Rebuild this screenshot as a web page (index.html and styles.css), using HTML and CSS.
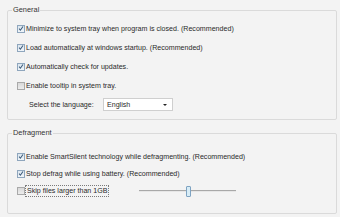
FILE: index.html
```html
<!DOCTYPE html>
<html>
<head>
<meta charset="utf-8">
<link rel="stylesheet" href="styles.css">
</head>
<body>
<div class="page">
  <fieldset class="group general">
    <legend>General</legend>
    <div class="row"><span class="cb on"><svg viewBox="0 0 8 8"><path d="M1.5 4.2 L3.2 6.3 L6.6 1.4"/></svg></span><span class="lbl">Minimize to system tray when program is closed. (Recommended)</span></div>
    <div class="row"><span class="cb on"><svg viewBox="0 0 8 8"><path d="M1.5 4.2 L3.2 6.3 L6.6 1.4"/></svg></span><span class="lbl">Load automatically at windows startup. (Recommended)</span></div>
    <div class="row"><span class="cb on"><svg viewBox="0 0 8 8"><path d="M1.5 4.2 L3.2 6.3 L6.6 1.4"/></svg></span><span class="lbl">Automatically check for updates.</span></div>
    <div class="row"><span class="cb"></span><span class="lbl">Enable tooltip in system tray.</span></div>
    <div class="row lang">
      <span class="lang-label">Select the language:</span>
      <span class="select"><span class="sel-text">English</span><span class="arrow"></span></span>
    </div>
  </fieldset>
  <fieldset class="group defrag">
    <legend>Defragment</legend>
    <div class="row r2"><span class="cb on"><svg viewBox="0 0 8 8"><path d="M1.5 4.2 L3.2 6.3 L6.6 1.4"/></svg></span><span class="lbl">Enable SmartSilent technology while defragmenting. (Recommended)</span></div>
    <div class="row r2"><span class="cb on"><svg viewBox="0 0 8 8"><path d="M1.5 4.2 L3.2 6.3 L6.6 1.4"/></svg></span><span class="lbl">Stop defrag while using battery. (Recommended)</span></div>
    <div class="row r2 last"><span class="cb"></span><span class="lbl focus">Skip files larger than 1GB</span>
      <span class="slider"><span class="track"></span><span class="thumb"></span></span>
    </div>
  </fieldset>
</div>
</body>
</html>
```
FILE: styles.css
```css
html, body {
  margin: 0;
  padding: 0;
  background: #f3f3f3;
}
body {
  font-family: "Liberation Sans", Arial, sans-serif;
  font-size: 7.1px;
  color: #2a2a2a;
}
.page {
  padding: 5px 0 0 7px;
}
.group {
  box-sizing: border-box;
  width: 330px;
  margin: 0;
  border: 1px solid #dadada;
  border-radius: 2px;
  padding: 0 4px;
}
.group legend {
  padding: 0 1px;
  line-height: 10px;
  color: #333;
  font-size: 7.4px;
}
.general {
  padding-top: 4px;
  padding-bottom: 5px;
}
.defrag {
  margin-top: 8px;
  padding-top: 10px;
  padding-bottom: 13px;
}
.row {
  display: flex;
  align-items: center;
  height: 19px;
  padding-left: 5px;
}
.row.r2 {
  height: 17px;
}
.row.last {
  height: 18px;
}
.cb {
  box-sizing: border-box;
  width: 8px;
  height: 8px;
  border: 1px solid #a9a9a9;
  background: linear-gradient(#d9d9d9, #ececec);
  margin-right: 1px;
  display: flex;
  align-items: center;
  justify-content: center;
  flex: none;
}
.cb.on {
  border-color: #8fa6bd;
  background: linear-gradient(#dbe6ef, #f0f5f9);
}
.cb svg {
  width: 7px;
  height: 7px;
  fill: none;
  stroke: #3b5a7a;
  stroke-width: 1.4;
}
.lbl {
  white-space: nowrap;
  line-height: 10px;
}
.focus {
  outline: 1px dotted #7a7a7a;
  outline-offset: 0;
  padding: 0 1px;
}
.lang-label {
  margin-left: 12px;
  width: 74px;
}
.select {
  box-sizing: border-box;
  width: 70px;
  height: 13px;
  background: #fff;
  border: 1px solid #cfcfcf;
  display: flex;
  align-items: center;
  justify-content: space-between;
  padding: 0 5px 0 3px;
}
.arrow {
  width: 0;
  height: 0;
  border-left: 2px solid transparent;
  border-right: 2px solid transparent;
  border-top: 2px solid #222;
}
.slider {
  position: relative;
  margin-left: 31px;
  width: 97px;
  height: 11px;
  display: flex;
  align-items: center;
}
.track {
  width: 100%;
  height: 1px;
  background: #a8a8a8;
  border-bottom: 1px solid #e6e6e6;
}
.thumb {
  position: absolute;
  left: 47px;
  top: 0;
  box-sizing: border-box;
  width: 5px;
  height: 11px;
  border: 1px solid #7ea3c2;
  background: #d7ecf6;
  border-radius: 1px;
}
```
